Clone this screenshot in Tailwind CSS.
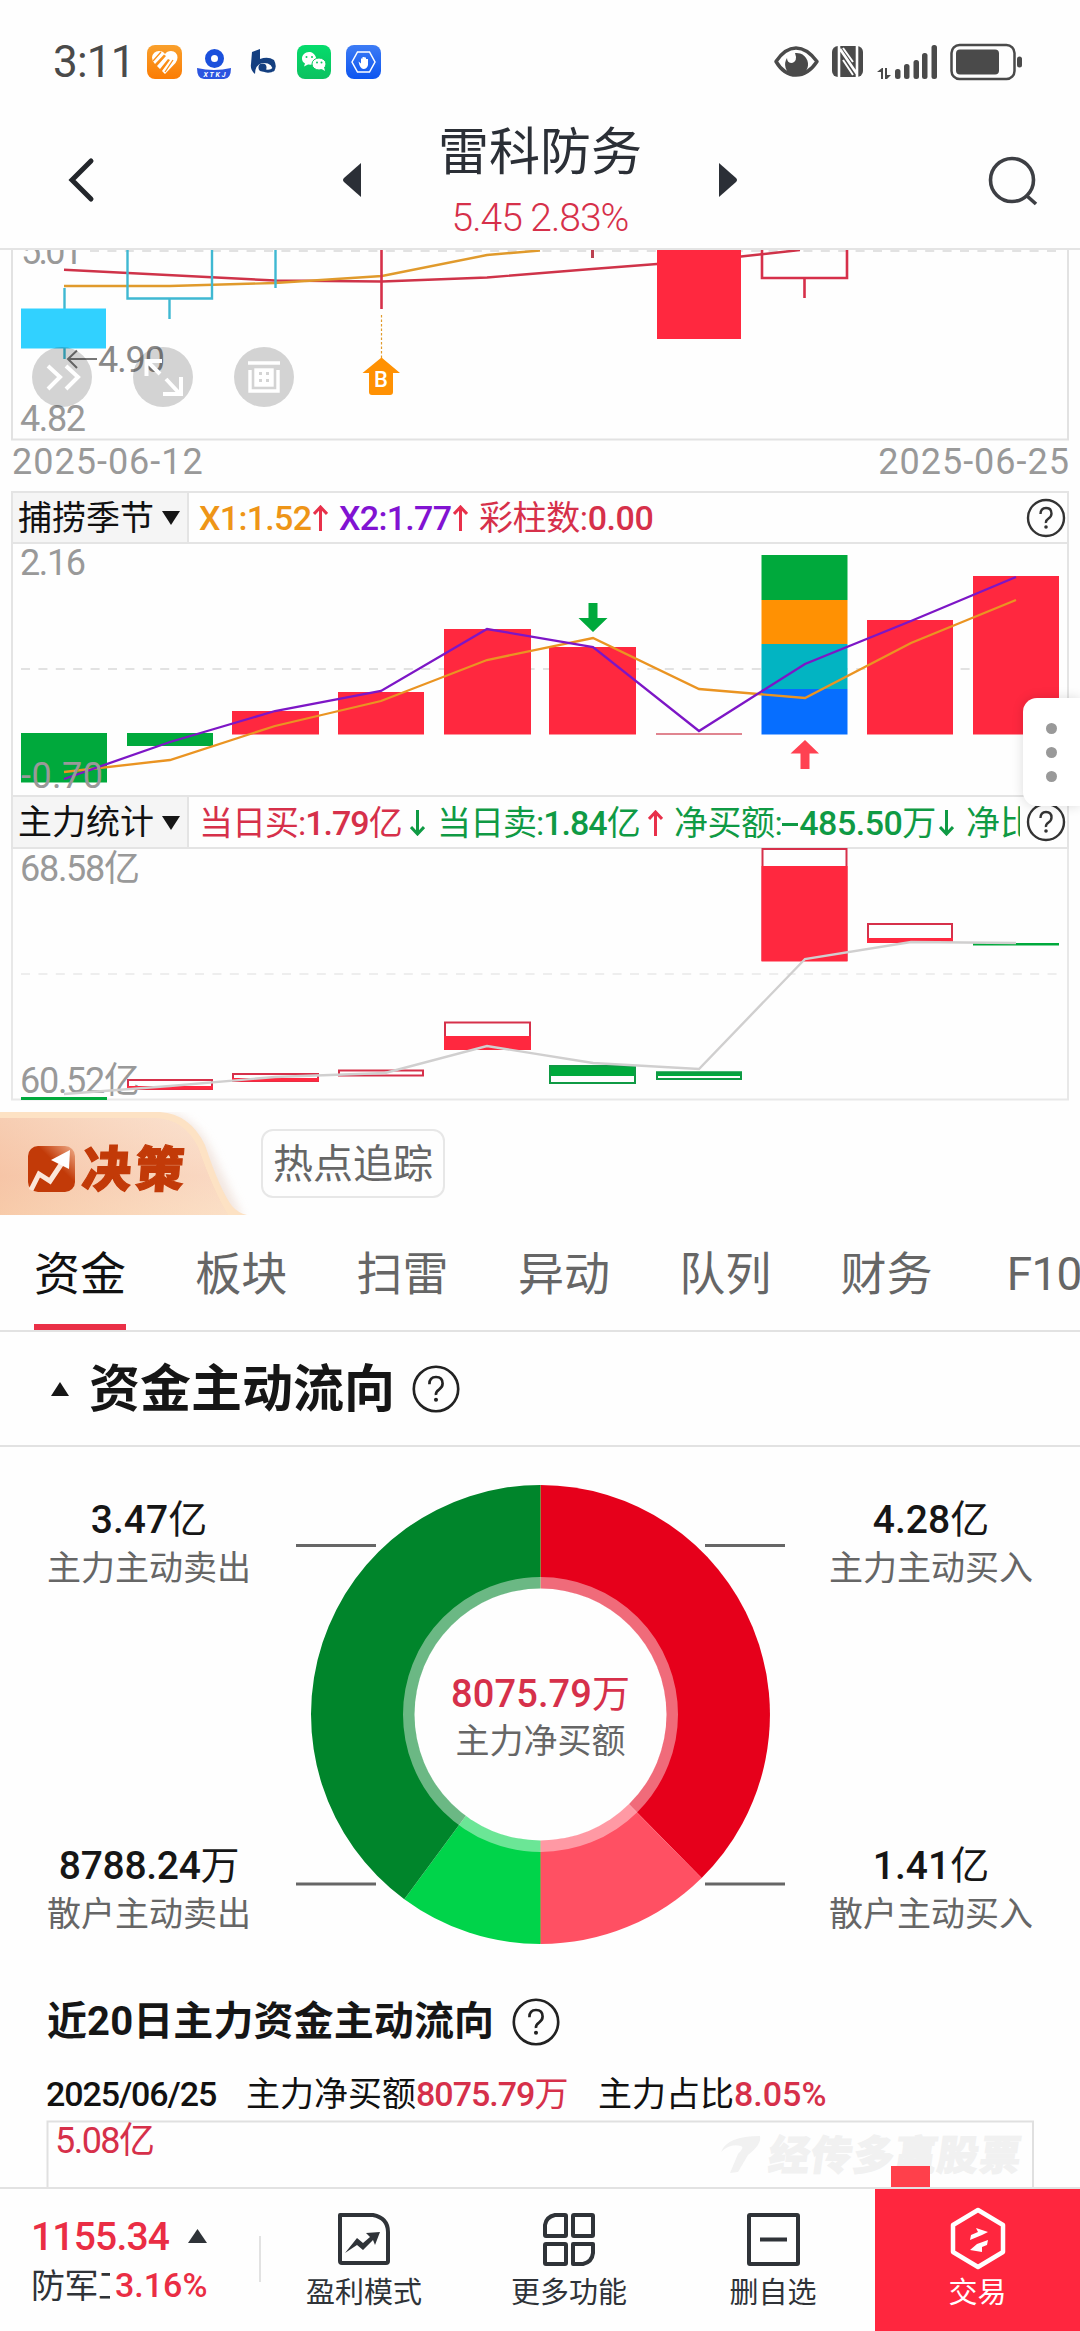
<!DOCTYPE html>
<html lang="zh-CN">
<head>
<meta charset="utf-8">
<title>雷科防务</title>
<script src="https://cdn.jsdelivr.net/npm/@tailwindcss/browser@4"></script>
</head>
<body class="w-[1080px] h-[2331px] overflow-hidden bg-white font-[Roboto,'Noto_Sans_CJK_SC',sans-serif] text-[#111] leading-none whitespace-nowrap">
<div class="relative flex flex-col w-[1080px] h-[2331px] bg-[#fefefe]">

  <!-- status bar -->
  <div class="h-[124px] shrink-0 flex items-center pl-[53px] pr-[57px]">
    <span class="text-[44px] w-[92px] text-[#4a4a4a] tracking-[-0.8px]">3:11</span>
    <svg class="w-[240px] h-[40px]" viewBox="145 42 240 40">
      <defs>
        <linearGradient id="og" x1="0" y1="0" x2="0" y2="1"><stop offset="0" stop-color="#f9a02c"/><stop offset="1" stop-color="#fb7c04"/></linearGradient>
        <linearGradient id="gg" x1="0" y1="0" x2="0" y2="1"><stop offset="0" stop-color="#05dc6c"/><stop offset="1" stop-color="#0cc160"/></linearGradient>
        <linearGradient id="bg" x1="0" y1="0" x2="0" y2="1"><stop offset="0" stop-color="#3d7cf5"/><stop offset="1" stop-color="#0d55f0"/></linearGradient>
      </defs>
      <rect x="147" y="45" width="35" height="34" rx="8" fill="url(#og)"/>
      <path d="M152 57.500q1-6.500 7-6.500q4 0 6 3q2-3 6-3q6 0 6.500 6.500q0 3-2 5.500L165 74L162 71L170 60L168 59L160 69L157 66L166 56L164 54.500L155 64Q152 61 152 57.500z" fill="#fff"/>
      <path d="M153 61L161 52M165 72L173 60" stroke="#fb9018" stroke-width="1.300" fill="none"/>
      <circle cx="214.500" cy="58.500" r="6.500" fill="none" stroke="#1b50dc" stroke-width="6"/>
      <path d="M197 68q17 4 34 0q0 11-7 11h-20q-7 0-7-11z" fill="#2c55e0"/>
      <text x="203.500" y="77" font-size="7" font-weight="700" font-style="italic" fill="#fff" textLength="22">XTKJ</text>
      <path d="M252 52l8-3v10q8-3 14 1q4 8-1 12q0-10-11-9q-7 2-7 11q-5-4-4-10z" fill="#143f80"/>
      <circle cx="262.500" cy="67.500" r="4" fill="#143f80"/><path d="M263 70q6 3 11-1" stroke="#143f80" stroke-width="3" fill="none"/>
      <rect x="297" y="45" width="34" height="34" rx="8" fill="url(#gg)"/>
      <path d="M309 52c-4 0-7 3-7 6.500c0 2 1 4 3 5l-1 3l4-2c7 1 9-3 8-7c-1-3.500-4-5.500-7-5.500z" fill="#fff"/>
      <ellipse cx="319" cy="64" rx="7" ry="6" fill="#fff" stroke="#0ccb63"/><path d="M320 68l5 3l-1-4z" fill="#fff"/>
      <g fill="#0ccb63"><circle cx="306.500" cy="57" r="1"/><circle cx="312" cy="57" r="1"/><circle cx="317" cy="62.500" r="1"/><circle cx="321.500" cy="62.500" r="1"/></g>
      <rect x="346" y="45" width="35" height="34" rx="8" fill="url(#bg)"/>
      <path d="M352 62l5.500-10h12l5.500 10l-5.500 10h-12z" fill="none" stroke="#fff" stroke-width="1.500"/>
      <path d="M358.500 61.500l2.500 2v-5h1.500v3v-4.500h2v4.500v-4h1.500v4.500v-3h2v6q-1 4-4.500 4q-3.500 0-5-7.500z" fill="#fff"/>
    </svg>
    <svg class="w-[254px] h-[40px] ml-auto" viewBox="769 42 254 40" fill="#4a4a4a">
      <path d="M776 61.500Q785 48 796 48T817 61.500Q808 75 796 75T776 61.500z" fill="none" stroke="#4a4a4a" stroke-width="3.500" stroke-linejoin="round"/>
      <path d="M795 53a11.500 11.500 0 1 1-8 5q0 5 5 5q6-2 3-10z"/>
      <rect x="832" y="46" width="31" height="31" rx="6"/>
      <path d="M839 46v31M840 49l17 25M857 77v-31" stroke="#fefefe" stroke-width="2.600" fill="none"/><path d="M843 60l10 15M843 48l10 14" stroke="#fefefe" stroke-width="2" fill="none"/>
      <path d="M877 72l5-4h1v11h-2v-7zM885 68h2v7h4l-4 4h-2z"/>
      <rect x="895" y="69" width="5.500" height="10" rx="2.500"/><rect x="904" y="64" width="5.500" height="15" rx="2.500"/><rect x="913.500" y="60" width="5.500" height="19" rx="2.500"/><rect x="922" y="53" width="5.500" height="26" rx="2.500"/><rect x="931.500" y="45" width="5.500" height="34" rx="2.500"/>
      <rect x="951.500" y="45" width="63" height="34" rx="8" fill="none" stroke="#4a4a4a" stroke-width="2.500"/>
      <rect x="956" y="49.500" width="43" height="25" rx="4"/><rect x="1017" y="56.500" width="5" height="11" rx="2.500"/>
    </svg>
  </div>

  <!-- title bar -->
  <header class="h-[126px] shrink-0 flex items-center border-b-2 border-[#e4e4e4] px-[42px] justify-between">
    <svg class="w-[80px] h-[60px] -mt-3" viewBox="42 151 80 60"><path d="M91 162L72 181L91 200" fill="none" stroke="#23262b" stroke-width="5" stroke-linecap="round"/></svg>
    <div class="flex items-center gap-[56px]">
      <svg class="w-[20px] h-[36px] -mt-3" viewBox="0 0 20 36"><path d="M19 1v34L2 20q-2-2 0-4z" fill="#2b2f36"/></svg>
      <div class="w-[244px] flex flex-col items-center -mt-[8px]">
        <h1 class="text-[51px] text-[#2b2f36] leading-[52px]">雷科防务</h1>
        <p class="text-[39px] font-light text-[#d6304a] leading-[40px] mt-[19px] tracking-[-1px]">5.45 2.83%</p>
      </div>
      <svg class="w-[20px] h-[36px] -mt-3" viewBox="0 0 20 36"><path d="M1 1v34L18 20q2-2 0-4z" fill="#2b2f36"/></svg>
    </div>
    <svg class="w-[80px] h-[60px] -mt-3" viewBox="958 151 80 60" fill="none" stroke="#3d3f44" stroke-width="3.600"><circle cx="1012" cy="181" r="21.500"/><path d="M1027 197l9 8"/></svg>
  </header>

  <!-- candles -->
  <svg class="w-[1080px] h-[192px] shrink-0" viewBox="0 250 1080 192">
    <path d="M12 250V439.500H1068V250" fill="none" stroke="#e2e2e2" stroke-width="2"/>
    <path d="M90 251H1060" stroke="#e2e2e2" stroke-width="2" stroke-dasharray="9 8.400"/>
    <path d="M64 269.700L275 280.500L382 281.500L487 277.500L592 269L657 264L741 256.500L800 250" fill="none" stroke="#cf3349" stroke-width="2.400"/>
    <path d="M64 286H170L275 283L382 276L487 255L540 250.500" fill="none" stroke="#e09a2c" stroke-width="2.400"/>
    <g stroke="#3fb8d2" stroke-width="2.400" fill="none"><path d="M64.500 288V309M64.500 348V359M127.500 250V298.500H212V250M169.500 299V319M275.500 250V288"/></g>
    <rect x="21" y="308.500" width="85" height="40" fill="#31d1ff"/>
    <path d="M381.500 250V309" stroke="#d6304a" stroke-width="2.600"/><path d="M381.500 315V358" stroke="#e09a2c" stroke-width="1.200" stroke-dasharray="2.500 2"/>
    <path d="M592.500 250V258" stroke="#bb4150" stroke-width="3"/>
    <rect x="657" y="250" width="84" height="89" fill="#ff283f"/>
    <path d="M762 250V278H847V250M804.500 278V298" stroke="#d6304a" stroke-width="2.600" fill="none"/>
    <path d="M381.500 357.500L400 373H393V392q0 3-3 3H372q-3 0-3-3V373H362.500z" fill="#ff9103"/>
    <text x="374" y="387" font-size="22" font-weight="500" fill="#fff">B</text>
    <g font-size="36" fill="#999"><text x="21" y="264" textLength="62">5.01</text><text x="20" y="431" textLength="66">4.82</text></g>
    <text x="98" y="372" font-size="36" fill="#888" textLength="67">4.90</text><path d="M97 359H68M77 350.500L68 359L77 368" fill="none" stroke="#777" stroke-width="2"/>
    <g fill="#000" fill-opacity=".17"><circle cx="62" cy="377" r="30"/><circle cx="163" cy="377" r="30"/><circle cx="264" cy="377" r="30"/></g>
    <g fill="none" stroke="#fff" stroke-width="4"><path d="M48 366L60 377L48 389M66 366L78 377L66 389M146.500 376V361H162M148 362L160 374M166 379L180 394M181 377V394H163"/></g>
    <g fill="none" stroke="#fff" stroke-width="3.400"><path d="M248 363H280M250 370V391H278V370"/><rect x="256" y="370" width="16" height="15" fill="#fff" stroke="#fff"/></g>
    <path d="M259 372h3v3h-3zM266 372h3v3h-3zM259 379h3v3h-3zM266 379h3v3h-3z" fill="#d4d4d4"/>
  </svg>
  <div class="h-[49px] shrink-0 flex justify-between pl-[12px] pr-[10px] pt-[1px] text-[36px] leading-[38px] text-[#999] tracking-[1px]"><span>2025-06-12</span><span>2025-06-25</span></div>

  <!-- indicator row 1 -->
  <div class="h-[53px] shrink-0 ml-[11px] mr-[11px] border-2 border-[#e4e4e4] flex items-center text-[34px] font-medium text-[#d6304a]">
    <div class="w-[176px] h-full shrink-0 bg-[#f5f5f5] border-r-2 border-[#e4e4e4] flex items-center pl-[5px] text-[#111] font-normal">捕捞季节<svg class="ml-2 w-[18px] h-[15px]" viewBox="0 0 18 15"><path d="M0 1H18L9 15z" fill="#161616"/></svg></div>
    <span class="w-[114px] ml-[10px] text-[#ee9517] tracking-[-0.7px]">X1:1.52</span>
    <svg class="w-[15px] h-[26px]" viewBox="0 0 15 26"><path d="M7.500 26V2M1 9L7.500 2L14 9" fill="none" stroke="#e8304a" stroke-width="3"/></svg>
    <span class="w-[114px] ml-[11px] text-[#8112d2] tracking-[-0.7px]">X2:1.77</span>
    <svg class="w-[15px] h-[26px]" viewBox="0 0 15 26"><path d="M7.500 26V2M1 9L7.500 2L14 9" fill="none" stroke="#e8304a" stroke-width="3"/></svg>
    <span class="ml-[11px] tracking-[-0.4px]"><span class="font-normal">彩柱数:</span>0.00</span>
    <svg class="w-[40px] h-[40px] ml-auto mr-[1px]" viewBox="0 0 40 40"><circle cx="20" cy="20" r="18" fill="none" stroke="#333" stroke-width="2.400"/><path d="M14.500 16q0-6 5.500-6t5.500 5.500q0 3-3 5t-2.500 4.500" fill="none" stroke="#333" stroke-width="2.400"/><circle cx="20" cy="29" r="1.800" fill="#333"/></svg>
  </div>

  <!-- chart 2 -->
  <svg class="w-[1080px] h-[251px] shrink-0" viewBox="0 544 1080 251">
    <path d="M12 544V795M1068 544V795" stroke="#e4e4e4" stroke-width="2"/>
    <path d="M21 669H1060" stroke="#e2e2e2" stroke-width="1.800" stroke-dasharray="9 8.400"/>
    <g fill="#00a93c"><rect x="21" y="733" width="86" height="49.500"/><rect x="127" y="733" width="86" height="13"/><rect x="761.500" y="555" width="86" height="45"/></g>
    <g fill="#ff283f"><rect x="232" y="711" width="87" height="23.500"/><rect x="338" y="692" width="86" height="42.500"/><rect x="444" y="629" width="87" height="105.500"/><rect x="549" y="647" width="87" height="87.500"/><rect x="867" y="620" width="86" height="114.500"/><rect x="973" y="576" width="86" height="158.500"/></g>
    <rect x="656" y="733" width="86" height="2" fill="#e08590"/>
    <rect x="761.500" y="600" width="86" height="44" fill="#ff9103"/><rect x="761.500" y="644" width="86" height="45" fill="#02b4c2"/><rect x="761.500" y="689" width="86" height="45.500" fill="#066eff"/>
    <path d="M64 772L170 760L275 726L381 701L487 660L593 638L699 689L805 698L911 643L1016 600" fill="none" stroke="#ea9422" stroke-width="2.300"/>
    <path d="M64 779L170 742L275 711L381 691L487 629L593 647L699 731L805 664L911 621L1016 577" fill="none" stroke="#7d16c6" stroke-width="2.300"/>
    <path d="M588.500 603h9v15h10L593 632L578.500 618h10z" fill="#00a93c"/>
    <path d="M800.500 769h9v-15.500h9.500L805 740L790.500 753.500h10z" fill="#ff4252"/>
    <g font-size="36" fill="#999"><text x="20" y="575" textLength="66">2.16</text><text x="21" y="788" textLength="82">-0.70</text></g>
  </svg>

  <!-- indicator row 2 -->
  <div class="h-[54px] shrink-0 ml-[11px] mr-[11px] border-2 border-[#e4e4e4] flex items-center text-[34px] font-medium text-[#0f9a44]">
    <div class="w-[176px] h-full shrink-0 bg-[#f5f5f5] border-r-2 border-[#e4e4e4] flex items-center pl-[5px] text-[#111] font-normal">主力统计<svg class="ml-2 w-[18px] h-[15px]" viewBox="0 0 18 15"><path d="M0 1H18L9 15z" fill="#161616"/></svg></div>
    <div class="w-[831px] h-full pt-[2px] overflow-hidden flex items-center [&>*]:shrink-0 tracking-[-1px]">
      <span class="w-[210px] pl-[10px] text-[#d6304a]"><span class="font-normal">当日买:</span>1.79<span class="font-normal">亿</span></span>
      <svg class="ml-[11px] w-[15px] h-[26px]" viewBox="0 0 15 26"><path d="M7.500 0V24M1 17L7.500 24L14 17" fill="none" stroke="#0f9a44" stroke-width="3"/></svg>
      <span class="ml-[12px] w-[208px]"><span class="font-normal">当日卖:</span>1.84<span class="font-normal">亿</span></span>
      <svg class="ml-[3px] w-[15px] h-[26px]" viewBox="0 0 15 26"><path d="M7.500 26V2M1 9L7.500 2L14 9" fill="none" stroke="#e8304a" stroke-width="3"/></svg>
      <span class="ml-[11px] w-[261px] tracking-[-0.5px]"><span class="font-normal">净买额:</span><span class="inline-block w-[16px] h-[3px] align-middle mr-[1px] -mt-[4px] overflow-hidden bg-[#0f9a44] text-transparent">-</span>485.50<span class="font-normal">万</span></span>
      <svg class="ml-[4px] w-[15px] h-[26px]" viewBox="0 0 15 26"><path d="M7.500 0V24M1 17L7.500 24L14 17" fill="none" stroke="#0f9a44" stroke-width="3"/></svg>
      <span class="ml-[12px] font-normal tracking-normal">净比</span>
    </div>
    <svg class="w-[40px] h-[40px] ml-auto mr-[1px]" viewBox="0 0 40 40"><circle cx="20" cy="20" r="18" fill="none" stroke="#333" stroke-width="2.400"/><path d="M14.500 16q0-6 5.500-6t5.500 5.500q0 3-3 5t-2.500 4.500" fill="none" stroke="#333" stroke-width="2.400"/><circle cx="20" cy="29" r="1.800" fill="#333"/></svg>
  </div>

  <!-- chart 3 -->
  <svg class="w-[1080px] h-[263px] shrink-0 overflow-visible" viewBox="0 849 1080 263">
    <path d="M12 849V1099.500H1068V849" fill="none" stroke="#e8e8e8" stroke-width="2"/>
    <path d="M21 974H1060" stroke="#eee" stroke-width="2" stroke-dasharray="9 8.400"/>
    <g font-size="36" fill="#999"><text x="20" y="881" textLength="120">68.58亿</text><text x="20" y="1093" textLength="120">60.52亿</text></g>
    <g fill="none" stroke="#d6304a" stroke-width="2"><rect x="128" y="1080" width="84" height="9"/><rect x="233" y="1074" width="85" height="7"/><rect x="339" y="1070.500" width="84" height="5"/><rect x="445" y="1022.500" width="85" height="26.500"/><rect x="762.500" y="849" width="84" height="111"/><rect x="868" y="924" width="84" height="18"/></g>
    <g fill="#ff283f"><rect x="127" y="1086" width="86" height="3.500"/><rect x="232" y="1078" width="87" height="3.500"/><rect x="444" y="1036" width="87" height="14"/><rect x="761.500" y="866" width="86" height="95.500"/><rect x="867" y="938" width="86" height="5"/></g>
    <g fill="#00a93c"><rect x="21" y="1097" width="86" height="3"/><rect x="549" y="1065" width="87" height="11"/><rect x="656" y="1071.500" width="86" height="4.500"/><rect x="973" y="943" width="86" height="2.500"/></g>
    <g fill="none" stroke="#0f9a44" stroke-width="2"><rect x="550" y="1066" width="85" height="17"/><rect x="657" y="1072.500" width="84" height="6.500"/></g>
    <path d="M64 1094L170 1086L275 1077L385 1073L487 1046L593 1063L699 1069L805 959L911 942L1016 943" fill="none" stroke="#d0cfcf" stroke-width="2.400"/>
  </svg>

  <!-- promo row -->
  <div class="h-[103px] shrink-0 flex items-center">
    <svg class="w-[261px] h-[103px] shrink-0" viewBox="0 1112 261 103">
      <defs>
        <linearGradient id="p1" x1="0" y1="0" x2="0" y2="1"><stop offset="0" stop-color="#f8ddcb"/><stop offset=".6" stop-color="#f6c8ae"/><stop offset="1" stop-color="#f9d6b4"/></linearGradient>
        <linearGradient id="p2" x1="0" y1="0" x2="1" y2="0"><stop offset="0" stop-color="#f6c3a2" stop-opacity=".6"/><stop offset="1" stop-color="#fde9d8" stop-opacity=".5"/></linearGradient>
        <linearGradient id="p3" x1="0" y1="1" x2="1" y2="0"><stop offset=".6" stop-color="#c23a08"/><stop offset="1" stop-color="#f0b08c"/></linearGradient>
        <filter id="sf" x="-20%" y="-20%" width="140%" height="140%"><feGaussianBlur stdDeviation="5"/></filter>
      </defs>
      <path d="M120 1114H175Q200 1124 212 1152L243 1218H120z" fill="#eddcd3" filter="url(#sf)" opacity=".7"/>
      <path d="M0 1112H160Q190 1114 205 1145Q220 1190 232 1206Q238 1213 247 1215H0z" fill="#fde2c4"/>
      <path d="M0 1118H155Q184 1119 198 1147Q213 1190 228 1215H0z" fill="url(#p1)"/><path d="M0 1118H155Q184 1119 198 1147Q213 1190 228 1215H0z" fill="url(#p2)"/>
      <rect x="28" y="1146" width="47" height="46" rx="10" fill="url(#p3)"/>
      <path d="M31 1190L39 1174L50 1181L64 1160" fill="none" stroke="#fbe6da" stroke-width="5"/><path d="M51 1160L70 1150L69 1169z" fill="#fff"/>
      <text x="0" y="0" transform="translate(81 1187) skewX(-4)" font-size="49" font-weight="900" fill="#c23a08" stroke="#c23a08" stroke-width="1.200" textLength="102">决策</text>
    </svg>
    <div class="w-[184px] h-[69px] -mt-px pt-[4px] border-2 border-[#e7e7e7] rounded-xl flex items-center justify-center text-[40px] text-[#666]">热点追踪</div>
  </div>

  <!-- tabs -->
  <nav class="h-[117px] shrink-0 border-b-2 border-[#e2e2e2] flex pl-[34px] gap-[69.3px] text-[46px] text-[#666] overflow-hidden [&>span]:h-full [&>span]:flex [&>span]:items-center [&>span]:pt-[3px] [&>span]:shrink-0">
    <span class="text-[#111] border-b-[6px] border-[#ea3047] !pt-[9px]">资金</span><span>板块</span><span>扫雷</span><span>异动</span><span>队列</span><span>财务</span><span class="ml-[5px] tracking-[-0.8px]">F10</span>
  </nav>

  <!-- section heading -->
  <div class="h-[115px] shrink-0 border-b-2 border-[#e2e2e2] flex items-center pl-[51px]">
    <svg class="w-[18px] h-[14px]" viewBox="0 0 18 14"><path d="M0 14H18L9 0z" fill="#161616"/></svg>
    <h2 class="ml-[20px] pt-[2px] text-[51px] font-bold text-[#161616]">资金主动流向</h2>
    <svg class="w-[48px] h-[48px] ml-[17px]" viewBox="0 0 40 40"><circle cx="20" cy="20" r="18.500" fill="none" stroke="#222" stroke-width="2.200"/><path d="M14.500 16q0-6 5.500-6t5.500 5.500q0 3-3 5t-2.500 4.500" fill="none" stroke="#222" stroke-width="2.200"/><circle cx="20" cy="29" r="1.700" fill="#222"/></svg>
  </div>

  <!-- donut -->
  <section class="h-[533px] shrink-0 flex justify-between pt-[38px] px-[34px]">
    <div class="flex flex-col justify-between h-[446px] w-[230px] items-center text-[34px] text-[#666] pt-[16px]">
      <div class="flex flex-col items-center gap-[11px]"><b class="text-[39px] font-medium text-[#161616]">3.47<span class="font-normal">亿</span></b><span>主力主动卖出</span></div>
      <div class="flex flex-col items-center gap-[11px]"><b class="text-[39px] font-medium text-[#161616] tracking-[-0.3px]">8788.24<span class="font-normal">万</span></b><span>散户主动卖出</span></div>
    </div>
    <svg class="w-[492px] h-[460px]" viewBox="294 1485 492 460">
      <g transform="translate(540.500 1714.500)">
        <path d="M0 0V-229.500A229.500 229.500 0 0 1 161.100 163.400z" fill="#e6001b"/>
        <path d="M0 0L161.100 163.400A229.500 229.500 0 0 1 0 229.500z" fill="#ff5063"/>
        <path d="M0 0V229.500A229.500 229.500 0 0 1 -136.200 184.700z" fill="#00d44a"/>
        <path d="M0 0L-136.200 184.700A229.500 229.500 0 0 1 0 -229.500z" fill="#00852b"/>
        <path d="M0 -229V229" stroke="#8b8b35" stroke-width=".6"/>
        <circle r="131.500" fill="none" stroke="#fff" stroke-opacity=".42" stroke-width="12"/><circle r="126" fill="#fefefe"/>
        <text x="0" y="-8" text-anchor="middle" font-size="38" font-weight="500" fill="#d6304a" textLength="179">8075.79<tspan font-weight="400">万</tspan></text>
        <text x="0" y="38" text-anchor="middle" font-size="34" fill="#666">主力净买额</text>
      </g>
      <path d="M296 1545.500H376M705 1545.500H785M296 1884H376M705 1884H785" stroke="#666" stroke-width="2.800"/>
    </svg>
    <div class="flex flex-col justify-between h-[446px] w-[230px] items-center text-[34px] text-[#666] pt-[16px]">
      <div class="flex flex-col items-center gap-[11px]"><b class="text-[39px] font-medium text-[#161616]">4.28<span class="font-normal">亿</span></b><span>主力主动买入</span></div>
      <div class="flex flex-col items-center gap-[11px]"><b class="text-[39px] font-medium text-[#161616]">1.41<span class="font-normal">亿</span></b><span>散户主动买入</span></div>
    </div>
  </section>

  <!-- 20 day flow -->
  <div class="h-[84px] shrink-0 flex items-center pl-[47px]">
    <h3 class="text-[40px] font-bold text-[#161616] tracking-[0.1px]">近20日主力资金主动流向</h3>
    <svg class="w-[48px] h-[48px] ml-[18px]" viewBox="0 0 40 40"><circle cx="20" cy="20" r="18.500" fill="none" stroke="#222" stroke-width="2.200"/><path d="M14.500 16q0-6 5.500-6t5.500 5.500q0 3-3 5t-2.500 4.500" fill="none" stroke="#222" stroke-width="2.200"/><circle cx="20" cy="29" r="1.700" fill="#222"/></svg>
  </div>
  <div class="h-[56px] shrink-0 flex items-center pt-[3px] pl-[46px] text-[34px]">
    <span class="w-[200px] font-medium tracking-[-1.1px]">2025/06/25</span>
    <span class="w-[352px]">主力净买额<span class="font-medium text-[#d6304a] tracking-[-1px]">8075.79</span><span class="text-[#d6304a]">万</span></span>
    <span>主力占比<span class="font-medium text-[#d6304a]">8.05%</span></span>
  </div>
  <svg class="w-[1080px] h-[67px] shrink-0" viewBox="0 2120 1080 67">
    <path d="M47.500 2187V2121.500H1033V2187" fill="none" stroke="#e0e0e0" stroke-width="2"/>
    <text x="55" y="2153" font-size="36" fill="#d6304a" textLength="100">5.08亿</text>
    <path d="M721 2152Q727 2136 760 2136Q762 2144 748 2155L738 2172L730 2173L738 2154Q745 2147 741 2146Q730 2143 721 2152z" fill="#f1f1f1"/>
    <text transform="translate(767 2170) skewX(-8)" font-size="41" font-weight="900" fill="#f1f1f1" stroke="#f1f1f1" textLength="252">经传多赢股票</text>
    <rect x="891" y="2166" width="39" height="21" fill="#ff404b"/>
  </svg>

  <!-- bottom bar -->
  <footer class="h-[144px] shrink-0 flex border-t-2 border-[#e2e2e2] text-[29px] text-[#2f3338]">
    <div class="w-[261px] flex flex-col pt-[29px] pl-[31px]">
      <div class="flex items-center text-[39px] font-medium text-[#ea2d44]"><span class="w-[157px] tracking-[-0.8px]">1155.34</span><svg class="w-[19px] h-[14px] -mt-1" viewBox="0 0 19 14"><path d="M0 14H19L9.500 0z" fill="#2f3338"/></svg></div>
      <div class="flex items-center text-[34px] mt-[8px]"><span class="w-[79px] overflow-hidden leading-[42px] tracking-[-0.5px]">防军工</span><span class="ml-[5px] pb-[3px] font-medium text-[#ea2d44]">3.16%</span></div>
    </div>
    <div class="w-[2px] h-[46px] mt-[47px] -ml-[2px] bg-[#e2e2e2]"></div>
    <div class="w-[206px] flex flex-col items-center pt-[23px] gap-[13px]">
      <svg class="w-[54px] h-[54px]" viewBox="0 0 54 54"><path d="M3 3H36Q51 6 51 20V49Q51 51 49 51H5Q3 51 3 49z" fill="none" stroke="#2f3338" stroke-width="4" stroke-linejoin="round"/><path d="M8 41L20 26L26 31L33 25L29 21L43 20L38 33L36 28L26 38L20 33z" fill="#2f3338"/></svg>
      <span>盈利模式</span>
    </div>
    <div class="w-[204px] flex flex-col items-center pt-[23px] gap-[13px]">
      <svg class="w-[54px] h-[54px]" viewBox="0 0 54 54" fill="none" stroke="#2f3338" stroke-width="4" stroke-linejoin="round"><path d="M13 3H23Q24 3 24 4V23Q24 24 23 24H4Q3 24 3 23V13Q4 5 13 3z"/><rect x="31" y="3" width="20" height="21" rx="1"/><rect x="3" y="32" width="21" height="20" rx="1"/><path d="M31 32H51V41Q50 50 41 52H31z"/></svg>
      <span>更多功能</span>
    </div>
    <div class="w-[204px] flex flex-col items-center pt-[23px] gap-[13px]">
      <svg class="w-[54px] h-[54px]" viewBox="0 0 54 54" fill="none" stroke="#2f3338" stroke-width="4" stroke-linejoin="round"><rect x="3" y="3" width="49" height="49" rx="1"/><path d="M14 27.500H41"/></svg>
      <span>删自选</span>
    </div>
    <div class="w-[205px] bg-[#ff263e] text-white flex flex-col items-center pt-[18px] gap-[9px]">
      <svg class="w-[56px] h-[63px]" viewBox="0 0 56 63"><path d="M28 3L53 18V45L28 60L3 45V18z" fill="none" stroke="#fff" stroke-width="4.500" stroke-linejoin="round"/><path d="M20 33L21 28L28 25L26 21L38 25L32 28z" fill="#fff"/><path d="M38 33L37 38L32 40L32 45L20 43L27 37z" fill="#fff"/></svg>
      <span>交易</span>
    </div>
  </footer>

  <!-- floating handle -->
  <div class="absolute right-0 top-[698px] w-[57px] h-[108px] rounded-l-[14px] bg-white shadow-[0_0_12px_rgba(0,0,0,0.14)] flex flex-col items-center justify-center gap-[13px] [&>i]:w-[11px] [&>i]:h-[11px] [&>i]:rounded-full [&>i]:bg-[#999]"><i></i><i></i><i></i></div>
</div>
</body>
</html>
